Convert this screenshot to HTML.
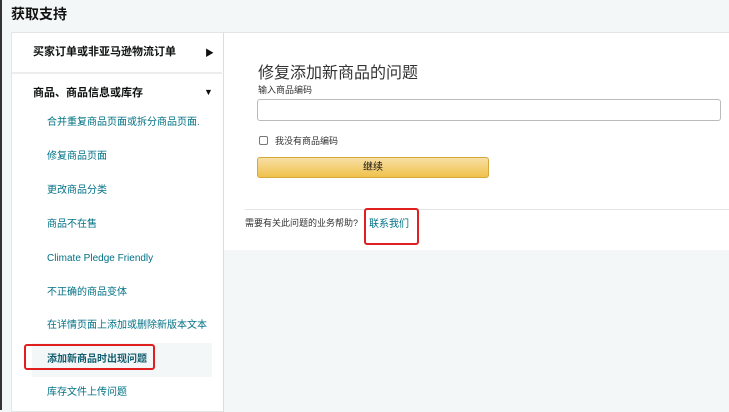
<!DOCTYPE html>
<html><head><meta charset="utf-8"><style>
*{margin:0;padding:0;box-sizing:border-box}
body{width:729px;height:410px;overflow:hidden;background:#f4f7f7;font-family:"Liberation Sans","Noto Sans CJK SC",sans-serif;position:relative;color:#0f1111}
.a{position:absolute}
.edge{left:0;top:0;width:2px;height:410px;background:#333}
.title{left:11px;top:4px;font-size:14px;font-weight:bold;color:#111;line-height:20px}
.left{left:11px;top:32px;width:213px;height:380px;background:#fff;border:1px solid #e3e6e6;border-right:1px solid #ddd}
.right{left:224px;top:32px;width:505px;height:218px;background:#fff;border-top:1px solid #e3e6e6}
.cat{font-size:11px;font-weight:bold;color:#0f1111;line-height:14px}
.sub{left:47px;font-size:10px;color:#007185;line-height:14px}
.tri{font-size:9px;color:#0f1111}
</style></head><body>
<div class="a edge"></div>
<div class="a title">获取支持</div>
<div class="a left"></div>
<div class="a" style="left:12px;top:72px;width:210px;height:2px;background:#eceeee"></div>
<div class="a cat" style="left:33px;top:45px">买家订单或非亚马逊物流订单</div>
<div class="a tri" style="left:205px;top:46px">▶</div>
<div class="a cat" style="left:33px;top:86px">商品、商品信息或库存</div>
<div class="a tri" style="left:204px;top:87px">▼</div>
<div class="a sub" style="top:116px">合并重复商品页面或拆分商品页面.</div>
<div class="a sub" style="top:150px">修复商品页面</div>
<div class="a sub" style="top:184px">更改商品分类</div>
<div class="a sub" style="top:218px">商品不在售</div>
<div class="a sub" style="top:252px">Climate Pledge Friendly</div>
<div class="a sub" style="top:286px">不正确的商品变体</div>
<div class="a sub" style="top:319px">在详情页面上添加或删除新版本文本</div>
<div class="a" style="left:32px;top:343px;width:180px;height:34px;background:#f4f7f7"></div>
<div class="a sub" style="top:353px;font-weight:bold;color:#0f5c6e">添加新商品时出现问题</div>
<div class="a" style="left:24px;top:344px;width:131px;height:26px;border:2px solid #e02020;border-radius:3px"></div>
<div class="a sub" style="top:386px">库存文件上传问题</div>
<div class="a right"></div>
<div class="a" style="left:258px;top:64px;font-size:16px;color:#333;line-height:20px">修复添加新商品的问题</div>
<div class="a" style="left:258px;top:83px;font-size:9px;color:#333">输入商品编码</div>
<div class="a" style="left:257px;top:99px;width:464px;height:22px;border:1px solid #bbb;border-radius:3px;background:#fff"></div>
<div class="a" style="left:259px;top:136px;width:9px;height:9px;border:1px solid #777;border-radius:2px;background:#fff"></div>
<div class="a" style="left:275px;top:134px;font-size:9px;color:#333">我没有商品编码</div>
<div class="a" style="left:257px;top:157px;width:232px;height:21px;border:1px solid #d4a93a;border-radius:3px;background:linear-gradient(#f7dfa5,#f0c14b);font-size:10px;text-align:center;line-height:19px;color:#111">继续</div>
<div class="a" style="left:245px;top:209px;width:484px;height:1px;background:#e3e6e6"></div>
<div class="a" style="left:245px;top:216px;font-size:9px;color:#333">需要有关此问题的业务帮助?</div>
<div class="a" style="left:369px;top:215px;font-size:10px;color:#007185">联系我们</div>
<div class="a" style="left:364px;top:208px;width:55px;height:37px;border:2px solid #e02020;border-radius:3px"></div>
</body></html>
